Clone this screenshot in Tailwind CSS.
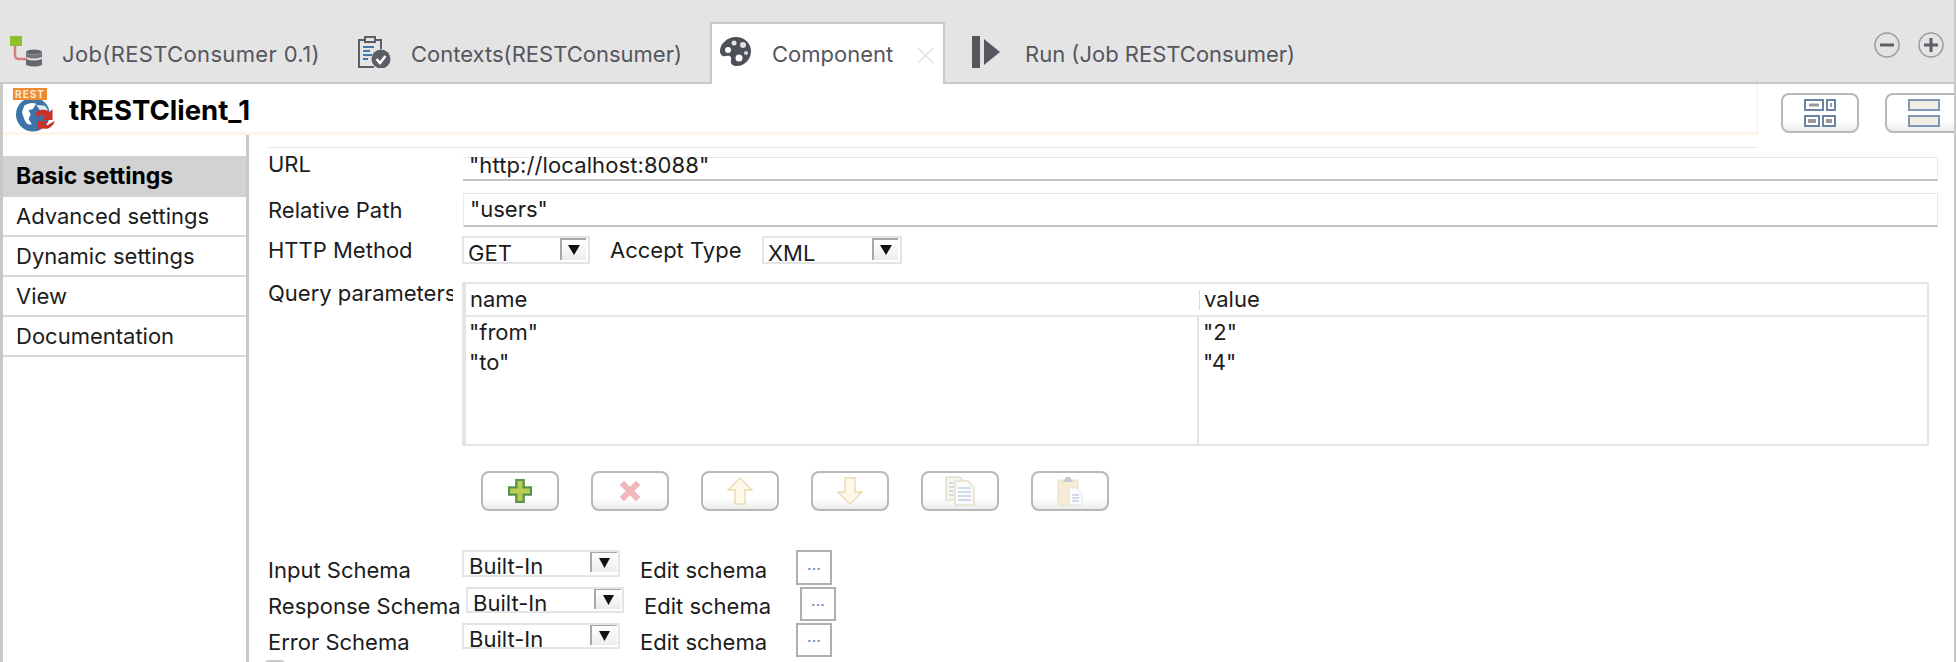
<!DOCTYPE html>
<html lang="en">
<head>
  <meta charset="UTF-8">
  <title>Component - tRESTClient_1</title>
  <script src="https://cdn.jsdelivr.net/npm/@tailwindcss/browser@4"></script>
</head>
<body class="bg-white">
  <div class="w-[1956px] h-[662px] overflow-hidden border-r-2 border-[#c8c8c8] font-['Inter',sans-serif] text-[22px] text-[#1c1c1c]">

    <!-- Tab bar -->
    <div class="h-[84px] bg-[#e4e4e4] border-b-2 border-[#c8c8c8] flex text-[#55565e] relative">
      <div class="flex items-center pt-[26px] pl-[10px] w-[358px] shrink-0">
        <svg width="32" height="32" viewBox="0 0 32 32" class="-mt-[4px] shrink-0">
          <rect x="0" y="0" width="12" height="10" fill="#8fc02c"/>
          <path d="M5 10v9q0 4 4 4h8" fill="none" stroke="#d87f7c" stroke-width="2.500"/>
          <ellipse cx="24" cy="16" rx="8" ry="2.500" fill="#64666c"/>
          <path d="M16 17q8 3 16 0v4q-8 3-16 0z" fill="#74767c"/>
          <path d="M16 23q8 3 16 0v6q-8 3-16 0z" fill="#64666c"/>
        </svg>
        <span class="ml-[20px] whitespace-nowrap tracking-[0.35px]">Job(RESTConsumer 0.1)</span>
      </div>
      <div class="flex items-center pt-[26px] w-[352px] shrink-0">
        <svg width="33" height="32" viewBox="0 0 33 32" class="-mt-[4px] shrink-0">
          <path d="M6 4H1v27h15M18 4h5v9" fill="none" stroke="#5c5e66" stroke-width="2"/>
          <rect x="7" y="1" width="10" height="5" fill="#e4e4e4" stroke="#5c5e66" stroke-width="2"/>
          <path d="M5 11h11M5 15h7M5 19h9M5 23h5" stroke="#3f78ae" stroke-width="2"/>
          <circle cx="23" cy="23" r="9.500" fill="#5c5e66"/>
          <path d="M18.500 23l3.500 4 5.500-7" fill="none" stroke="#fff" stroke-width="2.500"/>
        </svg>
        <span class="ml-[20px] whitespace-nowrap">Contexts(RESTConsumer)</span>
      </div>
      <div class="self-end h-[62px] w-[235px] shrink-0 -mb-[2px] bg-white border-2 border-b-0 border-[#c8c8c8] flex items-center pl-[7px]">
        <svg width="33" height="31" viewBox="0 0 33 31" class="-mt-[6px] shrink-0">
          <path d="M17 1C8 1 1 8 1 15c0 4 3 6 6 5 4-1 6 1 5 4-1 4 2 6 6 6 8 0 14-7 14-15S25 1 17 1z" fill="#4e5059"/>
          <circle cx="9" cy="14" r="3" fill="#fff"/>
          <circle cx="15" cy="7" r="2.500" fill="#e4e4e4"/>
          <circle cx="24" cy="9" r="3" fill="#e0e0e0"/>
          <circle cx="27" cy="17" r="2" fill="#d8d8d8"/>
          <circle cx="20" cy="22" r="3.500" fill="#fff"/>
        </svg>
        <span class="ml-[20px]">Component</span>
        <svg width="17" height="17" viewBox="0 0 17 17" class="ml-[24px] mt-[3px] shrink-0">
          <path d="M1 1l15 15M16 1L1 16" stroke="#e2e2e2" stroke-width="1.500"/>
        </svg>
      </div>
      <div class="flex items-center pt-[26px] pl-[27px]">
        <svg width="28" height="32" viewBox="0 0 28 32" class="-mt-[4px] shrink-0">
          <rect x="0" y="0" width="8" height="32" fill="#55565e"/>
          <path d="M12 3l16 13-16 13z" fill="#55565e"/>
        </svg>
        <span class="ml-[25px] whitespace-nowrap">Run (Job RESTConsumer)</span>
      </div>
      <!-- view controls -->
      <svg width="26" height="26" viewBox="0 0 26 26" class="absolute left-[1874px] top-[32px]">
        <circle cx="13" cy="13" r="12" fill="none" stroke="#9a9ba0" stroke-width="1.500"/>
        <path d="M6 13h14" stroke="#5c5e66" stroke-width="3"/>
      </svg>
      <svg width="26" height="26" viewBox="0 0 26 26" class="absolute left-[1918px] top-[32px]">
        <circle cx="13" cy="13" r="12" fill="none" stroke="#9a9ba0" stroke-width="1.500"/>
        <path d="M6 13h14M13 6v14" stroke="#5c5e66" stroke-width="3"/>
      </svg>
    </div>

    <!-- Component title -->
    <div class="h-[51px] flex border-l-[3px] border-[#c8c8c8]">
      <div class="w-[1755px] shrink-0 border-b-[3px] border-r-2 border-[#fdf5ea] flex items-center">
        <div class="relative w-[66px] h-full shrink-0">
          <svg width="44" height="36" viewBox="0 0 40 33" class="absolute left-[9px] top-[12px]">
            <circle cx="19" cy="17" r="15.500" fill="#3a74a8"/>
            <path d="M11 9c4-3 8-3 11-2l-3 5-4 1 2 4-2 4 3 5c-4 1-6-2-7-5l-2-6z" fill="#fff"/>
            <path d="M22 8l8 1 3 4-7 1z" fill="#dce8f2"/>
            <path d="M21 17a8 8 0 0 1 13-2l3-3v10h-10l3-3a4 4 0 0 0-6 0z" fill="#c8322a"/>
            <path d="M39 23a9 9 0 0 1-13 6l-3 3v-9h10l-3 3a4 4 0 0 0 5-1z" fill="#c8322a"/>
          </svg>
          <span class="absolute left-[10px] top-[4px] w-[34px] h-[12px] bg-[#ed8b33] text-[#fde8cf] text-[10px] leading-[12px] font-bold text-center tracking-[1px]">REST</span>
        </div>
        <span class="font-bold text-[27.500px] leading-[34px] text-black mt-[4px]">tRESTClient_1</span>
      </div>
      <button class="ml-[23px] mt-[9px] w-[78px] h-[40px] shrink-0 rounded-[8px] border-2 border-[#b8b8b8] bg-gradient-to-b from-white from-70% to-[#ececec] flex items-center justify-center">
        <svg width="32" height="28" viewBox="0 0 32 28">
          <rect x="1" y="1" width="18" height="10" fill="#fff" stroke="#6c84a4" stroke-width="2"/>
          <rect x="5" y="4.500" width="10" height="3" fill="#999"/>
          <rect x="23" y="1" width="8" height="10" fill="#fff" stroke="#6c84a4" stroke-width="2"/>
          <rect x="26" y="4" width="2" height="4" fill="#999"/>
          <rect x="1" y="17" width="14" height="10" fill="#fff" stroke="#6c84a4" stroke-width="2"/>
          <rect x="4" y="20" width="8" height="4" fill="#999"/>
          <rect x="19" y="17" width="12" height="10" fill="#fff" stroke="#6c84a4" stroke-width="2"/>
          <rect x="22" y="20" width="6" height="4" fill="#999"/>
        </svg>
      </button>
      <button class="ml-[26px] mt-[9px] w-[78px] h-[40px] shrink-0 rounded-[8px] border-2 border-[#b8b8b8] bg-gradient-to-b from-white from-70% to-[#ececec] flex items-center justify-center">
        <svg width="32" height="28" viewBox="0 0 32 28">
          <rect x="1" y="1" width="30" height="10" fill="#eeeee2" stroke="#8098b8" stroke-width="2"/>
          <rect x="1" y="17" width="30" height="10" fill="#eeeee2" stroke="#8098b8" stroke-width="2"/>
        </svg>
      </button>
    </div>

    <!-- Main area -->
    <div class="flex h-[527px]">
      <!-- Side tabs -->
      <div class="w-[249px] shrink-0 border-l-[3px] border-r-[3px] border-[#c8c8c8] pt-[21px]">
        <div class="h-[41px] bg-[#d2d2d2] pl-[13px] flex items-center font-bold text-[23px] text-black">Basic settings</div>
        <div class="h-[40px] pl-[13px] flex items-center border-b-2 border-[#d8d8d8]">Advanced settings</div>
        <div class="h-[40px] pl-[13px] flex items-center border-b-2 border-[#d8d8d8]">Dynamic settings</div>
        <div class="h-[40px] pl-[13px] flex items-center border-b-2 border-[#d8d8d8]">View</div>
        <div class="h-[40px] pl-[13px] flex items-center border-b-2 border-[#d8d8d8]">Documentation</div>
      </div>

      <!-- Settings form -->
      <div class="flex-1 pl-[19px]">
        <div class="h-px bg-[#e8e8e8] mt-[12px] w-[1490px]"></div>

        <div class="flex mt-[9px] h-[24px]">
          <div class="w-[195px] shrink-0 leading-[14px]">URL</div>
          <div class="w-[1475px] h-full border-r border-t border-[#e8e8e8] border-b-2 border-b-[#c4c4c4] pl-[6px] leading-[14px] whitespace-nowrap tracking-[0.1px]">"http://localhost:8088"</div>
        </div>

        <div class="flex mt-[12px] h-[34px] items-center">
          <div class="w-[195px] shrink-0">Relative Path</div>
          <div class="w-[1475px] h-full border border-[#e8e8e8] border-b-2 border-b-[#c4c4c4] pl-[6px] flex items-center">"users"</div>
        </div>

        <div class="flex mt-[9px] h-[28px] items-center">
          <div class="w-[194px] shrink-0">HTTP Method</div>
          <div class="w-[128px] h-full border-2 border-[#e4e4e4] flex justify-between pl-[4px] pr-[2px]">
            <span class="leading-[30px]">GET</span>
            <span class="w-[26px] h-[22px] border-l-2 border-t-2 border-[#a8a8a8] bg-gradient-to-b from-white to-[#ececec] flex items-center justify-center"><svg width="14" height="12" viewBox="0 0 14 12"><path d="M1 1h12L7 11z" fill="#111"/></svg></span>
          </div>
          <div class="ml-[20px] w-[152px]">Accept Type</div>
          <div class="w-[140px] h-full border-2 border-[#e4e4e4] flex justify-between pl-[4px] pr-[2px]">
            <span class="leading-[30px]">XML</span>
            <span class="w-[26px] h-[22px] border-l-2 border-t-2 border-[#a8a8a8] bg-gradient-to-b from-white to-[#ececec] flex items-center justify-center"><svg width="14" height="12" viewBox="0 0 14 12"><path d="M1 1h12L7 11z" fill="#111"/></svg></span>
          </div>
        </div>

        <div class="flex mt-[18px]">
          <div class="w-[185px] mr-[9px] shrink-0 overflow-hidden whitespace-nowrap mt-[-1px] leading-[24px]">Query parameters</div>
          <div class="w-[1467px] h-[164px] border-2 border-l-4 border-[#e4e4e4]">
            <div class="flex h-[33px] border-b-2 border-[#e8e8e8]">
              <div class="w-[733px] pl-[4px] flex items-center">name</div>
              <div class="flex-1 pl-[5px] flex items-center relative before:absolute before:left-0 before:top-[6px] before:h-[20px] before:w-px before:bg-[#d8d8d8]">value</div>
            </div>
            <div class="flex h-[127px]">
              <div class="w-[733px] pl-[3px] border-r-2 border-[#e4e4e4]">
                <div class="h-[30px] leading-[30px]">"from"</div>
                <div class="h-[30px] leading-[31px]">"to"</div>
              </div>
              <div class="flex-1 pl-[4px]">
                <div class="h-[30px] leading-[30px]">"2"</div>
                <div class="h-[30px] leading-[31px]">"4"</div>
              </div>
            </div>
          </div>
        </div>

        <!-- Table toolbar -->
        <div class="flex gap-[32px] mt-[25px] ml-[213px]">
          <button class="w-[78px] h-[40px] rounded-[8px] border-2 border-[#b8b8b8] bg-gradient-to-b from-white from-70% to-[#ececec] flex items-center justify-center">
            <svg width="24" height="24" viewBox="0 0 26 26"><path d="M9 1h8v8h8v8h-8v8H9v-8H1V9h8z" fill="#bccb50" stroke="#55964e" stroke-width="2.500"/></svg>
          </button>
          <button class="w-[78px] h-[40px] rounded-[8px] border-2 border-[#b8b8b8] bg-gradient-to-b from-white from-70% to-[#ececec] flex items-center justify-center">
            <svg width="26" height="26" viewBox="0 0 26 26"><path d="M3 7l4-4 6 6 6-6 4 4-6 6 6 6-4 4-6-6-6 6-4-4 6-6z" fill="#f1b8bc" stroke="#efc6c8" stroke-width="1"/></svg>
          </button>
          <button class="w-[78px] h-[40px] rounded-[8px] border-2 border-[#b8b8b8] bg-gradient-to-b from-white from-70% to-[#ececec] flex items-center justify-center">
            <svg width="26" height="28" viewBox="0 0 26 28"><path d="M13 1l12 12h-7v14H8V13H1z" fill="#fdf8e8" stroke="#ecdcb8" stroke-width="1.500"/></svg>
          </button>
          <button class="w-[78px] h-[40px] rounded-[8px] border-2 border-[#b8b8b8] bg-gradient-to-b from-white from-70% to-[#ececec] flex items-center justify-center">
            <svg width="26" height="28" viewBox="0 0 26 28"><path d="M13 27L25 15h-7V1H8v14H1z" fill="#fdf8e8" stroke="#ecdcb8" stroke-width="1.500"/></svg>
          </button>
          <button class="w-[78px] h-[40px] rounded-[8px] border-2 border-[#b8b8b8] bg-gradient-to-b from-white from-70% to-[#ececec] flex items-center justify-center">
            <svg width="30" height="30" viewBox="0 0 30 30">
              <path d="M1 1h14l4 4v19H1z" fill="#f4f4f0" stroke="#e6e0cc" stroke-width="1.500"/>
              <path d="M4 7h5M4 11h5M4 15h5M4 19h5" stroke="#c9d2e2" stroke-width="1.500"/>
              <path d="M10 5h13l6 6v18H10z" fill="#fafafa" stroke="#e6e0cc" stroke-width="1.500"/>
              <path d="M13 12h13M13 16h13M13 20h13M13 24h13" stroke="#c3cfe4" stroke-width="1.500"/>
            </svg>
          </button>
          <button class="w-[78px] h-[40px] rounded-[8px] border-2 border-[#b8b8b8] bg-gradient-to-b from-white from-70% to-[#ececec] flex items-center justify-center">
            <svg width="26" height="30" viewBox="0 0 26 30">
              <rect x="1" y="4" width="20" height="25" rx="1" fill="#f6ebd4" stroke="#eadfc8"/>
              <path d="M6 6l3-5h4l3 5z" fill="#c8ccd2"/>
              <path d="M12 12h8l5 5v12H12z" fill="#fbfbfb" stroke="#dfe3ea"/>
              <path d="M15 19h7M15 22h7M15 25h7" stroke="#c3cfe4" stroke-width="1.500"/>
            </svg>
          </button>
        </div>

        <!-- Schema rows -->
        <div class="flex mt-[39px] h-[35px]">
          <div class="w-[194px] shrink-0 pt-[7px] leading-[26px]">Input Schema</div>
          <div class="w-[158px] h-[27px] border-2 border-[#e4e4e4] flex justify-between pl-[5px] pr-[1px]"><span class="leading-[28px] whitespace-nowrap">Built-In</span><span class="w-[27px] h-[20px] border-l-2 border-t border-[#a8a8a8] bg-gradient-to-b from-white to-[#ececec] flex items-center justify-center"><svg width="13" height="12" viewBox="0 0 13 12"><path d="M1 1h11L6.500 11z" fill="#111"/></svg></span></div>
          <div class="ml-[20px] w-[156px] pt-[7px] leading-[26px]">Edit schema</div>
          <div class="w-[36px] h-[35px] border-2 border-[#b0b0b0] flex items-center justify-center text-[#6a7fb8] text-[16px] pt-[2px]">···</div>
        </div>
        <div class="flex mt-[2px] h-[34px]">
          <div class="w-[198px] shrink-0 pt-[6px] leading-[26px] whitespace-nowrap">Response Schema</div>
          <div class="w-[158px] h-[26px] border-2 border-[#e4e4e4] flex justify-between pl-[5px] pr-[1px]"><span class="leading-[28px] whitespace-nowrap">Built-In</span><span class="w-[27px] h-[20px] border-l-2 border-t border-[#a8a8a8] bg-gradient-to-b from-white to-[#ececec] flex items-center justify-center"><svg width="13" height="12" viewBox="0 0 13 12"><path d="M1 1h11L6.500 11z" fill="#111"/></svg></span></div>
          <div class="ml-[20px] w-[156px] pt-[6px] leading-[26px]">Edit schema</div>
          <div class="w-[36px] h-[34px] border-2 border-[#b0b0b0] flex items-center justify-center text-[#6a7fb8] text-[16px] pt-[2px]">···</div>
        </div>
        <div class="flex mt-[2px] h-[34px]">
          <div class="w-[194px] shrink-0 pt-[6px] leading-[26px]">Error Schema</div>
          <div class="w-[158px] h-[26px] border-2 border-[#e4e4e4] flex justify-between pl-[5px] pr-[1px]"><span class="leading-[28px] whitespace-nowrap">Built-In</span><span class="w-[27px] h-[20px] border-l-2 border-t border-[#a8a8a8] bg-gradient-to-b from-white to-[#ececec] flex items-center justify-center"><svg width="13" height="12" viewBox="0 0 13 12"><path d="M1 1h11L6.500 11z" fill="#111"/></svg></span></div>
          <div class="ml-[20px] w-[156px] pt-[6px] leading-[26px]">Edit schema</div>
          <div class="w-[36px] h-[34px] border-2 border-[#b0b0b0] flex items-center justify-center text-[#6a7fb8] text-[16px] pt-[2px]">···</div>
        </div>
        <div class="w-[20px] h-[20px] mt-[3px] -ml-[3px] rounded-[4px] border-2 border-[#c8c8c8]"></div>
      </div>
    </div>
  </div>
</body>
</html>
